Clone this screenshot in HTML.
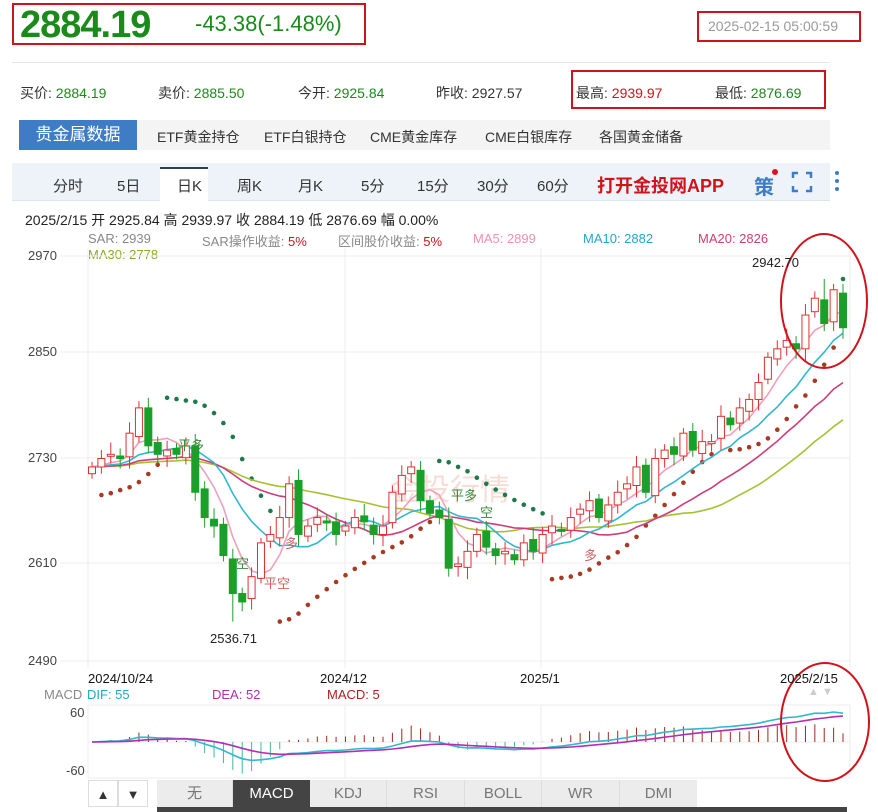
<!DOCTYPE html>
<html><head><meta charset="utf-8">
<style>
*{margin:0;padding:0;box-sizing:border-box}
body{width:878px;height:812px;background:#fff;font-family:"Liberation Sans","Noto Sans CJK SC",sans-serif;position:relative;overflow:hidden;color:#333}
.a{position:absolute;white-space:nowrap}
.box{position:absolute;border:2px solid #d0121b}
.g{color:#1a8a1a}.r{color:#d0121b}
</style></head><body>
<div class="box" style="left:12px;top:3px;width:354px;height:42px"></div>
<div class="a g" style="left:20px;top:4px;font-size:38px;font-weight:bold;letter-spacing:-1px">2884.19</div>
<div class="a g" style="left:195px;top:11px;font-size:22px">-43.38(-1.48%)</div>
<div class="box" style="left:697px;top:11px;width:164px;height:31px"></div>
<div class="a" style="left:708px;top:18px;font-size:14px;color:#999">2025-02-15 05:00:59</div>
<div class="a" style="left:12px;top:62px;width:818px;height:1px;background:#e6e6e6"></div>
<div class="a" style="left:20px;top:83px;font-size:14px">买价: <span class="g">2884.19</span></div>
<div class="a" style="left:158px;top:83px;font-size:14px">卖价: <span class="g">2885.50</span></div>
<div class="a" style="left:298px;top:83px;font-size:14px">今开: <span class="g">2925.84</span></div>
<div class="a" style="left:436px;top:83px;font-size:14px">昨收: 2927.57</div>
<div class="box" style="left:571px;top:70px;width:255px;height:39px"></div>
<div class="a" style="left:576px;top:83px;font-size:14px">最高: <span class="r">2939.97</span></div>
<div class="a" style="left:715px;top:83px;font-size:14px">最低: <span class="g">2876.69</span></div>
<div class="a" style="left:19px;top:120px;width:118px;height:30px;background:#3e7cc6;color:#fff;font-size:17px;text-align:center;line-height:30px">贵金属数据</div>
<div class="a" style="left:137px;top:120px;width:693px;height:30px;background:#f4f4f4"></div>
<div class="a" style="left:157px;top:127px;font-size:14px">ETF黄金持仓</div>
<div class="a" style="left:264px;top:127px;font-size:14px">ETF白银持仓</div>
<div class="a" style="left:370px;top:127px;font-size:14px">CME黄金库存</div>
<div class="a" style="left:485px;top:127px;font-size:14px">CME白银库存</div>
<div class="a" style="left:599px;top:127px;font-size:14px">各国黄金储备</div>
<div class="a" style="left:12px;top:163px;width:818px;height:38px;background:#eef3fa;border-bottom:1px solid #dde4ee"></div>
<div class="a" style="top:167px;height:34px;background:#fff;border-top:2px solid #2c3e50;left:160px;width:48px"></div>
<div class="a" style="top:175px;left:53px;font-size:15px">分时</div>
<div class="a" style="top:175px;left:117px;font-size:15px">5日</div>
<div class="a" style="top:175px;left:177px;font-size:15px">日K</div>
<div class="a" style="top:175px;left:237px;font-size:15px">周K</div>
<div class="a" style="top:175px;left:298px;font-size:15px">月K</div>
<div class="a" style="top:175px;left:361px;font-size:15px">5分</div>
<div class="a" style="top:175px;left:417px;font-size:15px">15分</div>
<div class="a" style="top:175px;left:477px;font-size:15px">30分</div>
<div class="a" style="top:175px;left:537px;font-size:15px">60分</div>
<div class="a r" style="top:172px;left:597px;font-size:18px;font-weight:bold">打开金投网APP</div>
<div class="a" style="top:171px;left:754px;font-size:20px;color:#3e7cc6;font-weight:bold">策</div>
<div class="a" style="top:169px;left:772px;width:6px;height:6px;border-radius:3px;background:#e0101a"></div>
<svg class="a" style="left:790px;top:170px" width="60" height="24"><g stroke="#3e7cc6" stroke-width="2.5" fill="none"><path d="M3 8V3h5M16 3h5v5M21 16v5h-5M8 21H3v-5"/></g><g fill="#3e7cc6"><circle cx="47" cy="3" r="2"/><circle cx="47" cy="11" r="2"/><circle cx="47" cy="19" r="2"/></g></svg>
<div class="a" style="left:25px;top:210px;font-size:14px;color:#222">2025/2/15 开 2925.84 高 2939.97 收 2884.19 低 2876.69 幅 0.00%</div>
<div class="a" style="left:88px;top:231px;font-size:13px;color:#888">SAR: 2939</div>
<div class="a" style="left:202px;top:231px;font-size:13px;color:#888">SAR操作收益: <span class="r">5%</span></div>
<div class="a" style="left:338px;top:231px;font-size:13px;color:#888">区间股价收益: <span class="r">5%</span></div>
<div class="a" style="left:473px;top:231px;font-size:13px;color:#f090b0">MA5: 2899</div>
<div class="a" style="left:583px;top:231px;font-size:13px;color:#20a8c8">MA10: 2882</div>
<div class="a" style="left:698px;top:231px;font-size:13px;color:#d04070">MA20: 2826</div>
<div class="a" style="left:88px;top:247px;font-size:13px;color:#8aab20">MA30: 2778</div>
<svg id="ch" class="a" style="left:0;top:0" width="878" height="812"></svg>
<div class="a" style="left:28px;top:248px;font-size:13px;color:#444">2970</div>
<div class="a" style="left:28px;top:344px;font-size:13px;color:#444">2850</div>
<div class="a" style="left:28px;top:450px;font-size:13px;color:#444">2730</div>
<div class="a" style="left:28px;top:555px;font-size:13px;color:#444">2610</div>
<div class="a" style="left:28px;top:653px;font-size:13px;color:#444">2490</div>
<div class="a" style="left:752px;top:255px;font-size:13px;color:#222">2942.70</div>
<div class="a" style="left:210px;top:631px;font-size:13px;color:#222">2536.71</div>
<div class="a" style="left:88px;top:671px;font-size:13px;color:#111">2024/10/24</div>
<div class="a" style="left:320px;top:671px;font-size:13px;color:#111">2024/12</div>
<div class="a" style="left:520px;top:671px;font-size:13px;color:#111">2025/1</div>
<div class="a" style="left:780px;top:671px;font-size:13px;color:#111">2025/2/15</div>
<div class="a" style="left:44px;top:687px;font-size:13px;color:#888">MACD</div>
<div class="a" style="left:87px;top:687px;font-size:13px;color:#20a8c8">DIF: 55</div>
<div class="a" style="left:212px;top:687px;font-size:13px;color:#b030b0">DEA: 52</div>
<div class="a" style="left:327px;top:687px;font-size:13px;color:#b02020">MACD: 5</div>
<div class="a" style="left:808px;top:686px;font-size:11px;color:#ccc">▲ ▼</div>
<div class="a" style="left:70px;top:705px;font-size:13px;color:#444">60</div>
<div class="a" style="left:66px;top:763px;font-size:13px;color:#444">-60</div>
<div class="a" style="left:88px;top:780px;width:30px;height:27px;border:1px solid #ddd;text-align:center;line-height:27px;font-size:13px">▲</div>
<div class="a" style="left:118px;top:780px;width:30px;height:27px;border:1px solid #ddd;text-align:center;line-height:27px;font-size:13px">▼</div>
<div class="a" style="left:157px;top:780px;width:540px;height:27px;background:#ececec;display:flex;font-size:15px;color:#777">
<div style="width:76px;text-align:center;line-height:27px;border-right:1px solid #ddd">无</div>
<div style="width:77px;text-align:center;line-height:27px;background:#444;color:#fff">MACD</div>
<div style="width:77px;text-align:center;line-height:27px;border-right:1px solid #ddd">KDJ</div>
<div style="width:78px;text-align:center;line-height:27px;border-right:1px solid #ddd">RSI</div>
<div style="width:77px;text-align:center;line-height:27px;border-right:1px solid #ddd">BOLL</div>
<div style="width:78px;text-align:center;line-height:27px;border-right:1px solid #ddd">WR</div>
<div style="width:77px;text-align:center;line-height:27px">DMI</div>
</div>
<div class="a" style="left:157px;top:807px;width:690px;height:5px;background:#444"></div>
<script>
var C=[2720,2730,2735,2730,2760,2790,2745,2735,2740,2735,2745,2690,2660,2650,2615,2570,2560,2590,2630,2640,2660,2700,2640,2650,2660,2655,2640,2650,2660,2655,2640,2650,2690,2710,2720,2680,2665,2660,2600,2605,2620,2640,2625,2615,2620,2610,2630,2620,2640,2650,2645,2660,2670,2680,2660,2675,2690,2700,2720,2690,2730,2740,2735,2760,2740,2750,2750,2780,2770,2790,2800,2820,2850,2860,2870,2860,2900,2920,2890,2930,2885];
var n=C.length,x0=92,dx=(843-92)/(n-1);
function Y(p){return 256+(2970-p)*0.8438}
var s='';
[256,352,458,563,661].forEach(function(y){s+='<line x1="60" x2="850" y1="'+y+'" y2="'+y+'" stroke="#eee"/>'});
[88,345,541,850].forEach(function(x){s+='<line x1="'+x+'" x2="'+x+'" y1="248" y2="668" stroke="#eee"/><line x1="'+x+'" x2="'+x+'" y1="705" y2="778" stroke="#eee"/>'});
[705,742,778].forEach(function(y){s+='<line x1="88" x2="850" y1="'+y+'" y2="'+y+'" stroke="#eee"/>'});
s+='<text x="390" y="500" font-size="30" fill="#f6dcd6" font-family="Liberation Sans,Noto Sans CJK SC,sans-serif">金投行情</text>';
var O=[],H=[],L=[];
for(var i=0;i<n;i++){var o=i?C[i-1]+((i*7)%5-2)*2:C[0]-8;O.push(o);H.push(Math.max(o,C[i])+6+(i*13)%9);L.push(Math.min(o,C[i])-6-(i*11)%9);}
L[15]=2536.7;H[n-3]=2942.7;
function ma(k){var r=[];for(var i=0;i<n;i++){var t=0;for(var j=0;j<k;j++){t+=C[Math.max(0,i-j)]}r.push(t/k)}return r}
function pl(a,col,f){var d='';for(var i=0;i<n;i++){d+=(i?'L':'M')+(x0+i*dx).toFixed(1)+' '+f(a[i]).toFixed(1)}s+='<path d="'+d+'" fill="none" stroke="'+col+'" stroke-width="1.6"/>'}
var up=true,sar=L[0]-20,ep=H[0],af=.02;
for(var i=1;i<n;i++){sar=sar+af*(ep-sar);
 if(up){if(L[i]<sar){up=false;sar=ep;ep=L[i];af=.02}else if(H[i]>ep){ep=H[i];af=Math.min(.2,af+.02)}}
 else{if(H[i]>sar){up=true;sar=ep;ep=H[i];af=.02}else if(L[i]<ep){ep=L[i];af=Math.min(.2,af+.02)}}
 s+='<circle cx="'+(x0+i*dx).toFixed(1)+'" cy="'+Y(sar).toFixed(1)+'" r="2.3" fill="'+(up?'#a83a22':'#1e7a4a')+'"/>';}
pl(ma(30),'#a8c030',Y);pl(ma(20),'#d03c78',Y);pl(ma(10),'#30b8d0',Y);pl(ma(5),'#f0a0b8',Y);
for(var i=0;i<n;i++){var x=x0+i*dx,u=C[i]>=O[i],col=u?'#e03030':'#18a028';
 s+='<line x1="'+x+'" x2="'+x+'" y1="'+Y(H[i])+'" y2="'+Y(L[i])+'" stroke="'+col+'"/>';
 var t=Y(Math.max(O[i],C[i])),b=Y(Math.min(O[i],C[i]));if(b-t<2)b=t+2;
 s+='<rect x="'+(x-3.5)+'" y="'+t+'" width="7" height="'+(b-t)+'" fill="'+(u?'#fff':col)+'" stroke="'+col+'"/>';}
s+='<g font-size="13" font-family="Noto Sans CJK SC,sans-serif"><text x="178" y="450" fill="#3a8a3a">平多</text><text x="236" y="568" fill="#3a8a3a">空</text><text x="264" y="588" fill="#d06060">平空</text><text x="285" y="548" fill="#d06060">多</text><text x="451" y="500" fill="#3a8a3a">平多</text><text x="480" y="517" fill="#3a8a3a">空</text><text x="584" y="560" fill="#d06060">多</text></g>';
function ema(a,k){var r=[],e=a[0],m=2/(k+1);for(var i=0;i<a.length;i++){e=a[i]*m+e*(1-m);r.push(e)}return r}
var e12=ema(C,12),e26=ema(C,26),dif=[];for(var i=0;i<n;i++)dif.push(e12[i]-e26[i]);var dea=ema(dif,9);
var mx=0;for(var i=0;i<n;i++)mx=Math.max(mx,Math.abs(dif[i]));var sc=30/mx;
function M(v){return 742-v*sc}
for(var i=0;i<n;i++){var x=x0+i*dx,h=(dif[i]-dea[i]);s+='<line x1="'+x+'" x2="'+x+'" y1="742" y2="'+M(h*3)+'" stroke="'+(h>=0?'#a02818':'#40b8a0')+'"/>'}
pl(dif,'#30b8d0',M);pl(dea,'#b030b0',M);
s+='<ellipse cx="824" cy="301" rx="43" ry="67" fill="none" stroke="#d0121b" stroke-width="2"/><ellipse cx="825" cy="722" rx="44" ry="59" fill="none" stroke="#d0121b" stroke-width="2"/>';
document.getElementById('ch').innerHTML=s;
</script>
</body></html>
